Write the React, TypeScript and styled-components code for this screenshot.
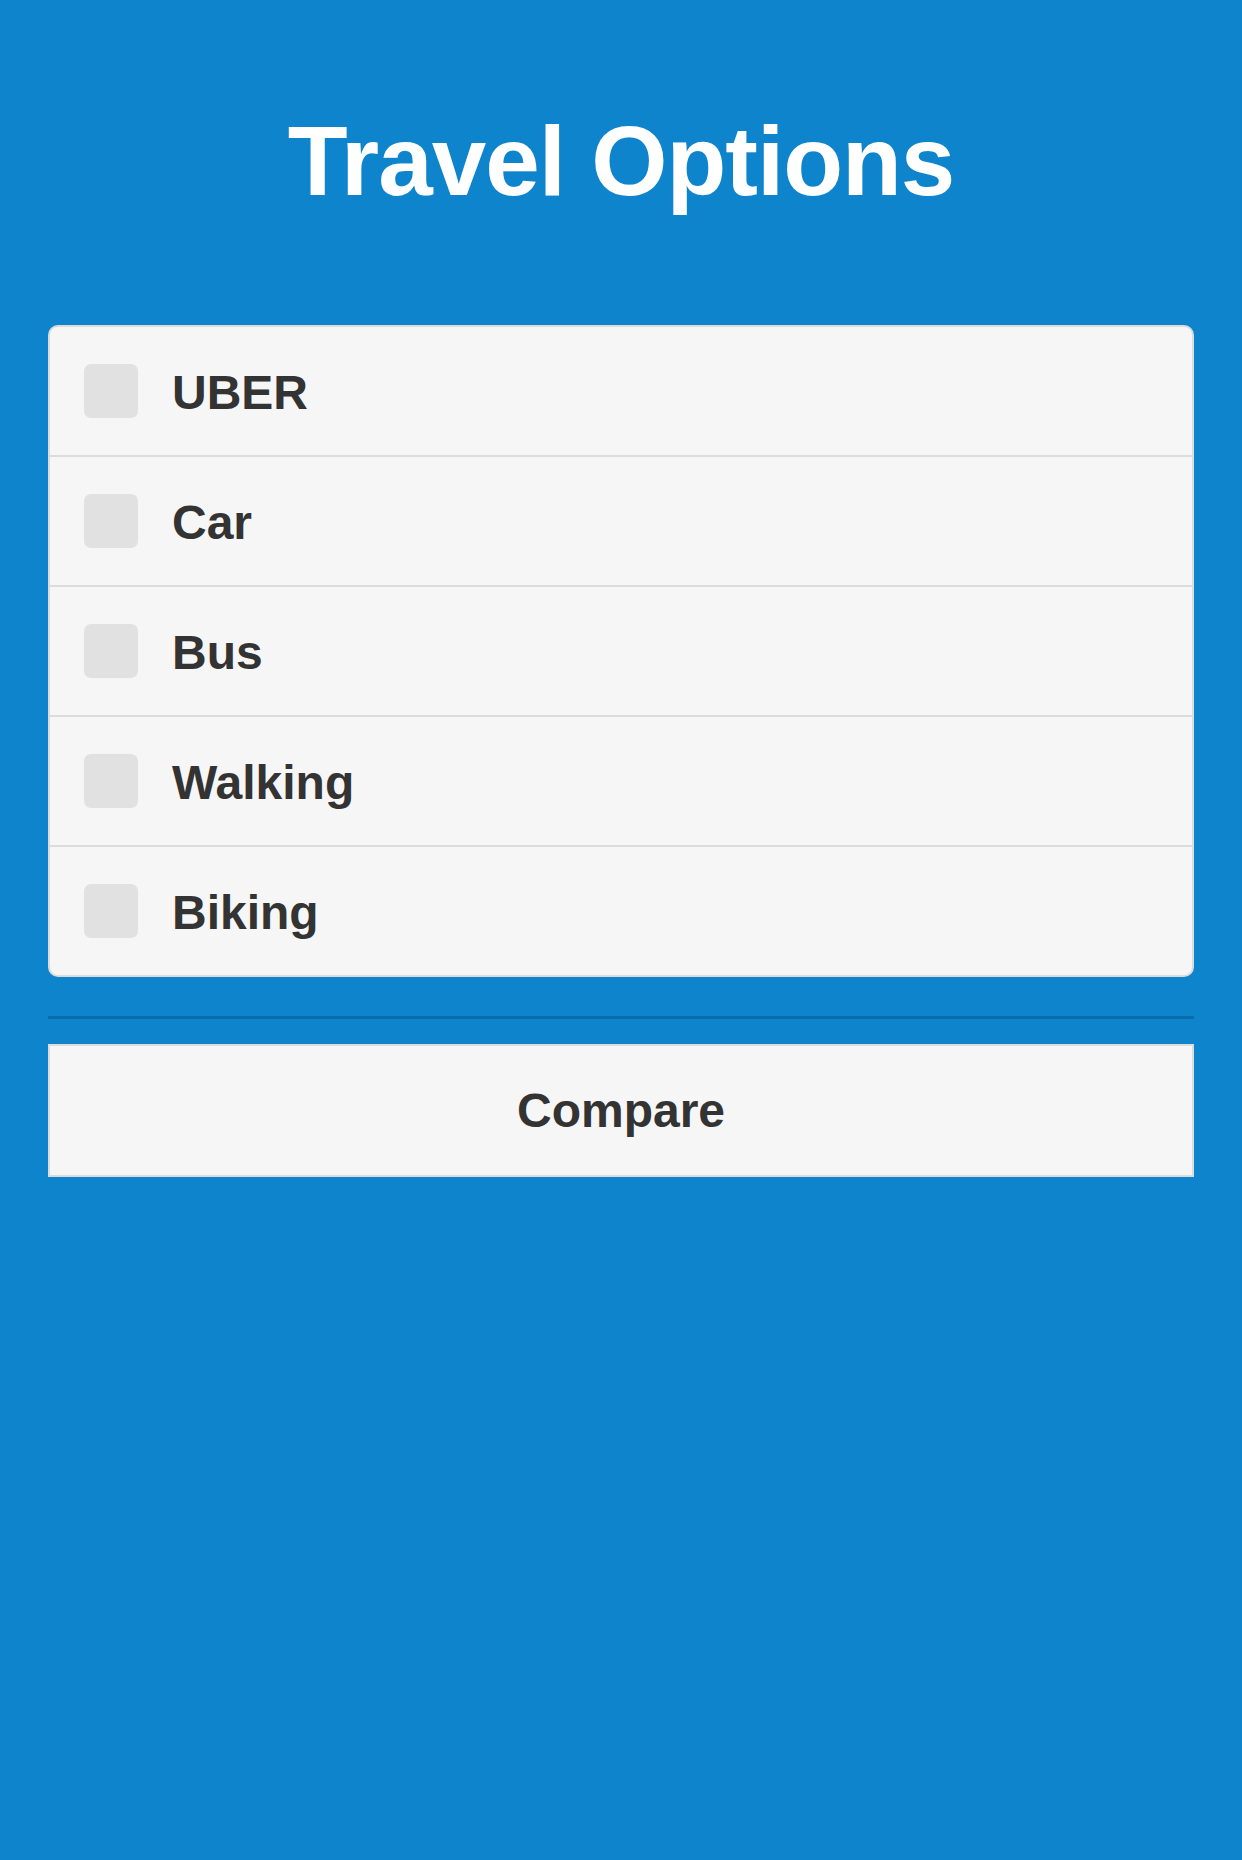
import React, {useState} from 'react';
import styled, {createGlobalStyle} from 'styled-components';

const GlobalStyle = createGlobalStyle`
  html, body {
    margin: 0;
    padding: 0;
    background: #0e84cd;
    font-family: "Liberation Sans", Arial, Helvetica, sans-serif;
  }
`;

const Page = styled.div`
  min-height: 1860px;
  padding: 112px 48px 0;
  box-sizing: border-box;
  background: #0e84cd;
`;

const Title = styled.h1`
  margin: 0 0 115px;
  font-size: 98px;
  line-height: 1;
  letter-spacing: -1px;
  font-weight: 700;
  color: #ffffff;
  text-align: center;
`;

const OptionList = styled.div`
  display: flex;
  flex-direction: column;
  background: #f6f6f6;
  border: 2px solid #dcdcdc;
  border-radius: 10px;
  overflow: hidden;
`;

const OptionRow = styled.label`
  display: flex;
  align-items: center;
  gap: 34px;
  height: 128px;
  padding: 0 34px;
  cursor: pointer;

  & + & {
    border-top: 2px solid #dcdcdc;
  }
`;

const Box = styled.span<{ $checked: boolean }>`
  width: 54px;
  height: 54px;
  flex-shrink: 0;
  border-radius: 7px;
  background: ${p => (p.$checked ? '#0e84cd' : '#e1e1e1')};
  display: flex;
  align-items: center;
  justify-content: center;
  color: #fff;
  font-size: 36px;
`;

const OptionText = styled.span`
  font-size: 48px;
  font-weight: 700;
  color: #333333;
  padding-top: 2px;
`;

const Divider = styled.hr`
  margin: 39px 0 25px;
  border: none;
  height: 3px;
  background: #0a6cab;
`;

const CompareButton = styled.button`
  display: block;
  width: 100%;
  height: 133px;
  background: #f6f6f6;
  border: 2px solid #dcdcdc;
  border-radius: 0;
  font-family: inherit;
  font-size: 48px;
  font-weight: 700;
  color: #333333;
  cursor: pointer;
`;

const options = ['UBER', 'Car', 'Bus', 'Walking', 'Biking'];

export default function App() {
    const [checked, setChecked] = useState<Record<string, boolean>>({});

    function toggle(name: string) {
        setChecked(prev => ({...prev, [name]: !prev[name]}));
    }

    return (
        <>
            <GlobalStyle/>
            <Page>
                <Title>Travel Options</Title>
                <OptionList>
                    {options.map(name => (
                        <OptionRow key={name} onClick={() => toggle(name)}>
                            <Box $checked={!!checked[name]}>{checked[name] ? '✓' : ''}</Box>
                            <OptionText>{name}</OptionText>
                        </OptionRow>
                    ))}
                </OptionList>
                <Divider/>
                <CompareButton>Compare</CompareButton>
            </Page>
        </>
    );
}
